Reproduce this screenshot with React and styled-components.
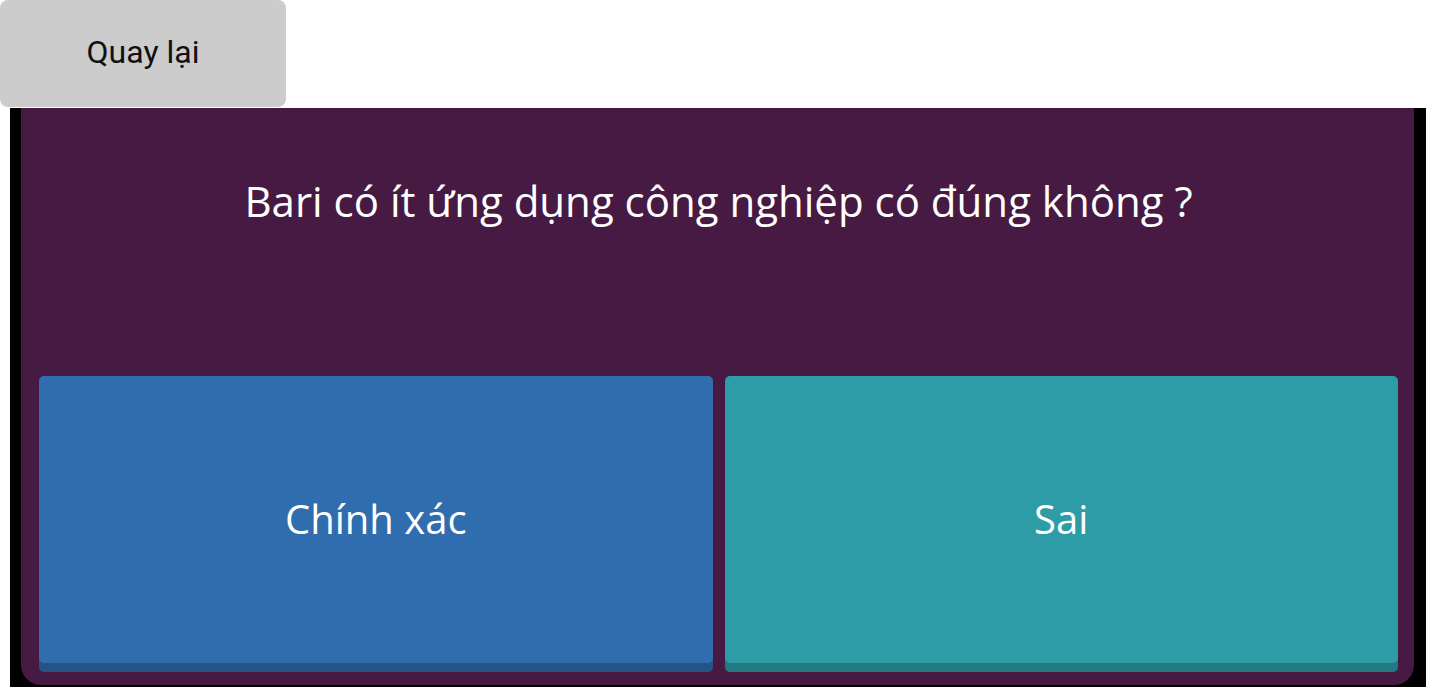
import React from "react";
import styled, { createGlobalStyle } from "styled-components";

const GlobalStyle = createGlobalStyle`
  html, body {
    margin: 0;
    padding: 0;
    background: #fff;
    overflow: hidden;
  }
`;

const Page = styled.div`
  display: flex;
  flex-direction: column;
  width: 1435px;
  height: 687px;
`;

const BackButton = styled.button`
  width: 286px;
  height: 107px;
  border: 0;
  border-radius: 8px;
  background-color: #cccccc;
  color: #111;
  font-family: Roboto, "Liberation Sans", sans-serif;
  font-size: 32px;
  padding: 0 0 4px;
  cursor: pointer;
  flex-shrink: 0;
`;

const Stage = styled.div`
  flex: 1;
  margin: 1px 9px 0 10px;
  padding: 0 12px 2px 11px;
  background-color: #000;
  display: flex;
  flex-direction: column;
  min-height: 0;
`;

const Card = styled.div`
  flex: 1;
  display: flex;
  flex-direction: column;
  background-color: #461a42;
  border-radius: 0 0 20px 20px;
  padding: 0 16px 13px 18px;
`;

const Question = styled.div`
  height: 268px;
  display: flex;
  align-items: center;
  justify-content: center;
  padding-bottom: 84px;
  box-sizing: border-box;
  color: #fff;
  font-family: "Open Sans", "Noto Sans", sans-serif;
  font-size: 42px;
`;

const Options = styled.div`
  flex: 1;
  display: grid;
  grid-template-columns: 1fr 1fr;
  gap: 12px;
`;

const Option = styled.button`
  border: 0;
  border-radius: 5px;
  background-color: ${(p) => p.color};
  box-shadow: inset 0 -9px 0 rgba(0, 0, 0, 0.22);
  padding: 0 0 11px;
  color: #fff;
  font-family: "Open Sans", "Noto Sans", sans-serif;
  font-size: 40px;
  cursor: pointer;
`;

export default function App() {
  return (
    <Page>
      <GlobalStyle />
      <BackButton>Quay lại</BackButton>
      <Stage>
        <Card>
          <Question>Bari có ít ứng dụng công nghiệp có đúng không ?</Question>
          <Options>
            <Option color="#2f6dae">Chính xác</Option>
            <Option color="#2d9ca6">Sai</Option>
          </Options>
        </Card>
      </Stage>
    </Page>
  );
}
